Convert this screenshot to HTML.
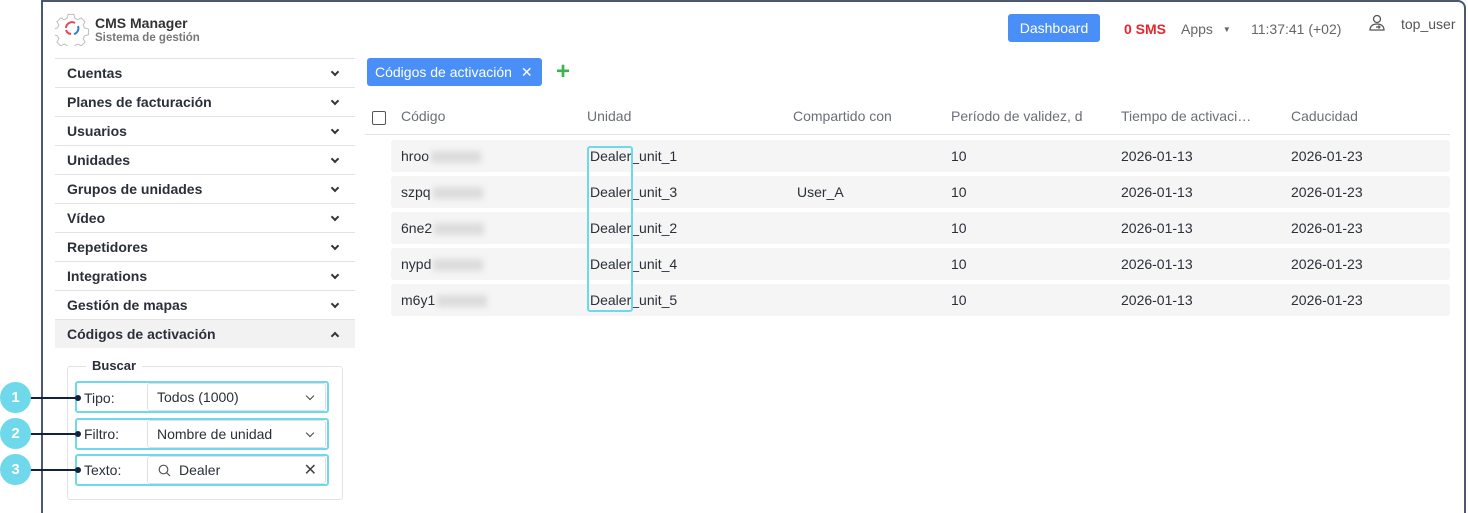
<!DOCTYPE html>
<html style="width:1468px;height:513px;overflow:hidden"><head><meta charset="utf-8"><style>
*{box-sizing:border-box;margin:0;padding:0}
html,body{width:1468px;height:513px;overflow:hidden}
body{background:#fff;font-family:"Liberation Sans",Arial,sans-serif;position:relative;color:#2b2f36}
.frame{position:absolute;left:41px;top:0;width:1425px;height:530px;border:2px solid #4b5670;border-top-right-radius:8px;border-bottom:none}
.abs{position:absolute}
.row{position:absolute;left:55px;width:300px;height:29px;border-top:1px solid #e3e3e3;font-size:14px;font-weight:bold;color:#2a2f3a;padding-left:12px;line-height:28px}
.row .ch{position:absolute;right:17px;top:10px;width:6px;height:6px;border-right:2px solid #333;border-bottom:2px solid #333;transform:rotate(45deg)}
.row .up{top:13px;transform:rotate(-135deg)}
.hl{position:absolute;left:75px;width:254px;height:32px;border:2px solid #6fd8ea;border-radius:3px}
.lbl{position:absolute;left:84px;font-size:14px;color:#2a2f3a}
.sel{position:absolute;left:147px;width:179px;height:28px;border:1px solid #e0e0e0;border-radius:3px;font-size:14px;padding-left:9px;line-height:27px;color:#2a2f3a}
.sel .ch{position:absolute;right:12px;top:9px;width:6px;height:6px;border-right:1.5px solid #444;border-bottom:1.5px solid #444;transform:rotate(45deg)}
.circ{position:absolute;left:0;width:31px;height:31px;border-radius:50%;background:#6fd8ea;color:#fff;font-weight:bold;font-size:15px;text-align:center;line-height:31px}
.line{position:absolute;left:30px;width:48px;height:2px;background:#14213d}
.dot{position:absolute;left:75px;width:6px;height:6px;border-radius:50%;background:#14213d}
.th{position:absolute;top:108px;font-size:14px;color:#6b6f78}
.tr{position:absolute;left:391px;width:1059px;height:32px;background:#f5f5f5;border-radius:3px;font-size:14px;color:#2a2f3a}
.tr span{position:absolute;top:8px}
.blur{display:inline-block;width:50px;height:12px;background:#dcdcdc;filter:blur(3px);vertical-align:middle;margin-left:2px}
</style></head><body>
<div class="frame"></div>
<svg class="abs" style="left:55px;top:12px" width="34" height="34" viewBox="0 0 34 34"><path d="M14 3h6l1 4 3 1.5 3.5-2 4 4-2 3.5 1.5 3 4 1v6l-4 1-1.5 3 2 3.5-4 4-3.5-2-3 1.5-1 4h-6l-1-4-3-1.5-3.5 2-4-4 2-3.5-1.5-3-4-1v-6l4-1 1.5-3-2-3.5 4-4 3.5 2 3-1.5z" fill="none" stroke="#bbb" stroke-width="1" transform="translate(-0.5,-0.5) scale(0.97)"/><path d="M11 16a6 6 0 0 1 9-5" fill="none" stroke="#e8445a" stroke-width="2"/><path d="M23 14a6 6 0 0 1-4 8" fill="none" stroke="#3a7bd5" stroke-width="2"/><path d="M16 22a6 6 0 0 1-5-4" fill="none" stroke="#e8445a" stroke-width="2"/></svg>
<div class="abs" style="left:95px;top:15px;font-size:14px;font-weight:bold;color:#333">CMS Manager</div>
<div class="abs" style="left:95px;top:32px;font-size:11.5px;font-weight:bold;color:#777">Sistema de gestión</div>
<div class="abs" style="left:1008px;top:14px;width:92px;height:28px;background:#4a8ff7;border-radius:3px;color:#fff;font-size:14px;text-align:center;line-height:28px">Dashboard</div>
<div class="abs" style="left:1124px;top:21px;font-size:14px;font-weight:bold;color:#e5262d">0 SMS</div>
<div class="abs" style="left:1181px;top:21px;font-size:14px;color:#666">Apps <span style="font-size:8px;margin-left:6px;position:relative;top:-2px">▼</span></div>
<div class="abs" style="left:1251px;top:21px;font-size:14px;color:#666">11:37:41 (+02)</div>
<svg class="abs" style="left:1368px;top:14px" width="18" height="18" viewBox="0 0 18 18"><circle cx="9" cy="5" r="3.5" fill="none" stroke="#555" stroke-width="1.3"/><path d="M2 16c0-4 3-6 7-6s7 2 7 6z" fill="none" stroke="#555" stroke-width="1.3"/><path d="M8 13h4m-1.5-1.5 1.5 1.5-1.5 1.5" stroke="#555" stroke-width="1.2" fill="none"/></svg>
<div class="abs" style="left:1401px;top:16px;font-size:14px;color:#555">top_user</div>

<div class="row" style="top:58px">Cuentas<i class="ch"></i></div>
<div class="row" style="top:87px">Planes de facturación<i class="ch"></i></div>
<div class="row" style="top:116px">Usuarios<i class="ch"></i></div>
<div class="row" style="top:145px">Unidades<i class="ch"></i></div>
<div class="row" style="top:174px">Grupos de unidades<i class="ch"></i></div>
<div class="row" style="top:203px">Vídeo<i class="ch"></i></div>
<div class="row" style="top:232px">Repetidores<i class="ch"></i></div>
<div class="row" style="top:261px">Integrations<i class="ch"></i></div>
<div class="row" style="top:290px">Gestión de mapas<i class="ch"></i></div>
<div class="row" style="top:319px;background:#f2f2f2">Códigos de activación<i class="ch up"></i></div>

<div class="abs" style="left:67px;top:366px;width:276px;height:134px;border:1px solid #e3e3e3;border-radius:3px"></div>
<div class="abs" style="left:86px;top:358px;background:#fff;padding:0 6px;font-size:13px;font-weight:bold;color:#2a2f3a">Buscar</div>

<div class="hl" style="top:381px"></div><div class="hl" style="top:418px"></div><div class="hl" style="top:454px"></div>
<div class="lbl" style="top:390px">Tipo:</div><div class="lbl" style="top:426px">Filtro:</div><div class="lbl" style="top:462px">Texto:</div>
<div class="sel" style="top:383px">Todos (1000)<i class="ch"></i></div>
<div class="sel" style="top:420px">Nombre de unidad<i class="ch"></i></div>
<div class="sel" style="top:456px;padding-left:31px">Dealer<svg class="abs" style="left:10px;top:7px" width="13" height="13" viewBox="0 0 13 13"><circle cx="5.5" cy="5.5" r="4.3" fill="none" stroke="#555" stroke-width="1.2"/><path d="M8.7 8.7 12 12" stroke="#555" stroke-width="1.2"/></svg><span class="abs" style="right:8px;top:0;font-size:16px;color:#444">✕</span></div>
<div class="line" style="top:397px"></div><div class="line" style="top:433px"></div><div class="line" style="top:469px"></div>
<div class="dot" style="top:395px"></div><div class="dot" style="top:431px"></div><div class="dot" style="top:467px"></div>
<div class="circ" style="top:382px">1</div><div class="circ" style="top:418px">2</div><div class="circ" style="top:454px">3</div>

<div class="abs" style="left:367px;top:58px;width:175px;height:28px;background:#4a8ff7;border-radius:3px;color:#fff;font-size:14px;line-height:28px;padding-left:8px">Códigos de activación <span style="margin-left:5px">✕</span></div>
<div class="abs" style="left:556px;top:58px;font-size:24px;font-weight:bold;color:#3cb44b;line-height:28px">+</div>

<div class="abs" style="left:372px;top:111px;width:14px;height:14px;border:1.5px solid #555;border-radius:2px"></div>
<div class="th" style="left:401px">Código</div>
<div class="th" style="left:587px">Unidad</div>
<div class="th" style="left:793px">Compartido con</div>
<div class="th" style="left:951px">Período de validez, d</div>
<div class="th" style="left:1121px">Tiempo de activaci…</div>
<div class="th" style="left:1291px">Caducidad</div>
<div class="abs" style="left:365px;top:134px;width:1085px;height:1px;background:#e3e3e3"></div>

<div class="tr" style="top:140px"><span style="left:10px">hroo<i class="blur"></i></span><span style="left:199px">Dealer_unit_1</span><span style="left:560px">10</span><span style="left:730px">2026-01-13</span><span style="left:900px">2026-01-23</span></div>
<div class="tr" style="top:176px"><span style="left:10px">szpq<i class="blur"></i></span><span style="left:199px">Dealer_unit_3</span><span style="left:406px">User_A</span><span style="left:560px">10</span><span style="left:730px">2026-01-13</span><span style="left:900px">2026-01-23</span></div>
<div class="tr" style="top:212px"><span style="left:10px">6ne2<i class="blur"></i></span><span style="left:199px">Dealer_unit_2</span><span style="left:560px">10</span><span style="left:730px">2026-01-13</span><span style="left:900px">2026-01-23</span></div>
<div class="tr" style="top:248px"><span style="left:10px">nypd<i class="blur"></i></span><span style="left:199px">Dealer_unit_4</span><span style="left:560px">10</span><span style="left:730px">2026-01-13</span><span style="left:900px">2026-01-23</span></div>
<div class="tr" style="top:284px"><span style="left:10px">m6y1<i class="blur"></i></span><span style="left:199px">Dealer_unit_5</span><span style="left:560px">10</span><span style="left:730px">2026-01-13</span><span style="left:900px">2026-01-23</span></div>
<div class="abs" style="left:587px;top:146px;width:46px;height:166px;border:2px solid #6fd8ea;border-radius:3px"></div>
</body></html>
